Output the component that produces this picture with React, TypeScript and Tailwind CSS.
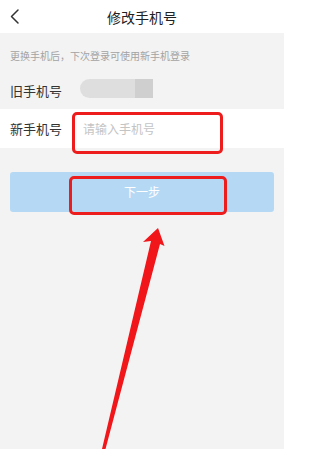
import React from "react";

export default function App() {
  return (
    <div
      className="relative w-[284px] h-[449px] overflow-hidden bg-[#f3f3f3]"
      style={{ fontFamily: '"Noto Sans CJK SC", "Noto Sans", sans-serif' }}
    >
      {/* Header */}
      <div className="relative h-[33px] bg-white flex items-center justify-center">
        <svg
          className="absolute left-0 top-0"
          width="30"
          height="33"
          viewBox="0 0 30 33"
          fill="none"
        >
          <polyline
            points="18,10 11.5,16.5 18,23"
            stroke="#333"
            strokeWidth="1.5"
            strokeLinecap="round"
            strokeLinejoin="round"
          />
        </svg>
        <span className="text-[14px] leading-[16px] text-[#222]">修改手机号</span>
      </div>

      {/* Subtitle */}
      <div className="h-[40px] pt-[16px] px-[10px] text-[10px] leading-[14px] text-[#a3a3a3]">
        更换手机后，下次登录可使用新手机登录
      </div>

      {/* Old phone row */}
      <div className="h-[36px] flex items-center px-[10px]">
        <span className="w-[70px] text-[13px] text-[#333]">旧手机号</span>
        <div className="flex h-[19px] w-[73px] rounded-l-[10px] overflow-hidden blur-[0.6px] -mt-[5px]">
          <div className="w-[55px] bg-[#dedede]" />
          <div className="w-[18px] bg-[#cfcfcf]" />
        </div>
      </div>

      {/* New phone row */}
      <div className="relative h-[39px] bg-white flex items-center px-[10px]">
        <span className="w-[73px] text-[13px] text-[#333]">新手机号</span>
        <span className="text-[12px] text-[#c4c4c4]">请输入手机号</span>
        <div className="absolute left-[72px] top-[3px] w-[151px] h-[42px] border-[3px] border-[#ee1d1d] rounded-[5px]" />
      </div>

      {/* Next button */}
      <div className="relative mx-[10px] mt-[24px] h-[40px] rounded-[3px] bg-[#b5d9f4] flex items-center justify-center">
        <span className="text-[12px] text-white">下一步</span>
        <div className="absolute left-[59px] top-[4px] w-[158px] h-[39px] border-[3px] border-[#ee1d1d] rounded-[5px]" />
      </div>

      {/* Red arrow annotation */}
      <svg
        className="absolute left-0 top-0 pointer-events-none"
        width="284"
        height="449"
        viewBox="0 0 284 449"
      >
        <polygon
          points="158,228 143,242 151,241 102,449 105.5,449 160,244 164.5,246"
          fill="#f0161a"
        />
      </svg>
    </div>
  );
}
